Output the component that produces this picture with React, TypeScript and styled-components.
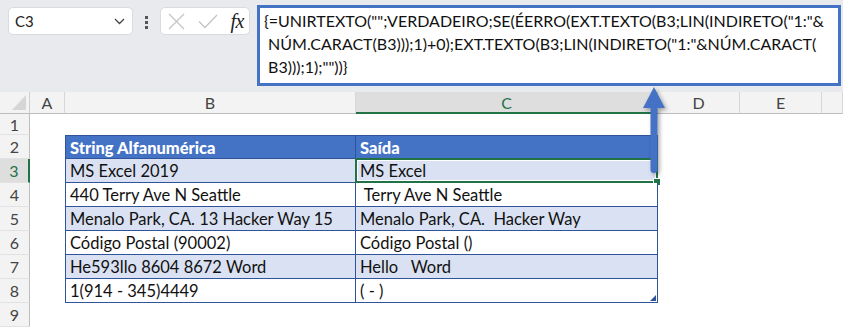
import styled, { createGlobalStyle, css } from 'styled-components';

const GlobalStyle = createGlobalStyle`
  html, body { margin: 0; padding: 0; background: #fff; }
  body { font-family: Lato, "Liberation Sans", sans-serif; }
`;

const BLUE = '#4472c4';
const LINE = '#30549a';
const GREEN = '#217346';

const Page = styled.div`
  position: relative;
  width: 843px;
  height: 327px;
  overflow: hidden;
  background: #fff;
`;

const TopBar = styled.div`
  display: flex;
  align-items: flex-start;
  height: 92px;
  box-sizing: border-box;
  padding: 5px 0 0 8px;
  background: #e8eaee;
`;

const NameBox = styled.div`
  display: flex;
  align-items: center;
  justify-content: space-between;
  box-sizing: border-box;
  width: 125px;
  height: 28px;
  margin-top: 2px;
  padding: 0 7px 0 6px;
  background: #fff;
  border: 1px solid #d9dbe0;
  border-radius: 5px;
  font-size: 15px;
  color: #222;
`;

const Dots = styled.div`
  display: flex;
  flex-direction: column;
  align-items: center;
  gap: 2px;
  width: 27px;
  margin-top: 11px;
  span {
    width: 3px;
    height: 3px;
    background: #555;
  }
`;

const FxBox = styled.div`
  display: flex;
  align-items: center;
  justify-content: space-between;
  box-sizing: border-box;
  width: 90px;
  height: 28px;
  margin-top: 2px;
  padding: 0 5px 0 7px;
  background: #fff;
  border: 1px solid #d9dbe0;
  border-radius: 5px;
`;

const FxLabel = styled.span`
  font-family: "Liberation Serif", serif;
  font-style: italic;
  font-size: 20px;
  color: #222;
  letter-spacing: -0.5px;
`;

const FormulaBox = styled.div`
  box-sizing: border-box;
  width: 584px;
  height: 81px;
  margin-left: 7px;
  padding: 1px 0 0 4px;
  background: #fff;
  border: 3px solid ${BLUE};
  font-size: 16px;
  line-height: 23px;
  color: #111;
  white-space: pre;
`;

const Sheet = styled.div`
  display: grid;
  grid-template-columns: 30px 35px 291px 302px 82px 82px 1fr;
  grid-template-rows: 22px 21px repeat(8, 24px);
  font-size: 16.5px;
`;

const Corner = styled.div`
  position: relative;
  background: #f3f3f3;
  border-right: 1px solid #cfcfcf;
  border-bottom: 1px solid #bdbdbd;
  &::after {
    content: '';
    position: absolute;
    right: 3px;
    bottom: 3px;
    width: 14px;
    height: 15px;
    background: #d6d6d6;
    clip-path: polygon(100% 0, 100% 100%, 0 100%);
  }
`;

const ColHead = styled.div<{ $active?: boolean }>`
  display: flex;
  align-items: center;
  justify-content: center;
  box-sizing: border-box;
  background: #f3f3f3;
  border-right: 1px solid #d7d7d7;
  border-bottom: 1px solid #bdbdbd;
  font-size: 16px;
  color: #444;
  ${({ $active }) =>
    $active &&
    css`
      background: #dedede;
      color: ${GREEN};
      border-bottom: 2px solid ${GREEN};
    `}
`;

const RowHead = styled.div<{ $active?: boolean }>`
  display: flex;
  align-items: center;
  justify-content: center;
  box-sizing: border-box;
  background: #f3f3f3;
  border-right: 1px solid #bdbdbd;
  border-bottom: 1px solid #e2e2e2;
  font-size: 16px;
  color: #444;
  ${({ $active }) =>
    $active &&
    css`
      background: #dedede;
      color: ${GREEN};
      border-right: 2px solid ${GREEN};
    `}
`;

const Empty = styled.div``;

const Cell = styled.div<{ $kind: 'head' | 'band' | 'plain'; $first?: boolean; $top?: boolean }>`
  position: relative;
  display: flex;
  align-items: center;
  box-sizing: border-box;
  padding: 1px 0 0 4px;
  white-space: pre;
  color: #111;
  border-right: 1px solid ${LINE};
  border-bottom: 1px solid ${LINE};
  ${({ $first }) => $first && css`border-left: 1px solid ${LINE};`}
  ${({ $top }) => $top && css`border-top: 1px solid ${LINE};`}
  background: ${({ $kind }) => ($kind === 'head' ? BLUE : $kind === 'band' ? '#d9e1f2' : '#fff')};
  ${({ $kind }) =>
    $kind === 'head' &&
    css`
      color: #fff;
      font-weight: 900;
    `}
`;

const Selection = styled.div`
  position: absolute;
  inset: -1px -1px -1px -1px;
  border: 2px solid ${GREEN};
  box-shadow: inset 0 0 0 1px #fff;
  pointer-events: none;
`;

const FillHandle = styled.div`
  position: absolute;
  right: -5px;
  bottom: -5px;
  width: 6px;
  height: 6px;
  background: ${GREEN};
  border: 1px solid #fff;
`;

const ResizeHandle = styled.div`
  position: absolute;
  right: 1px;
  bottom: 1px;
  width: 0;
  height: 0;
  border-left: 6px solid transparent;
  border-bottom: 6px solid ${LINE};
`;

const ArrowLayer = styled.svg`
  position: absolute;
  left: 636px;
  top: 82px;
  overflow: visible;
  pointer-events: none;
`;

const cols = ['A', 'B', 'C', 'D', 'E', ''];

const rows: [string, string][] = [
  ['String Alfanumérica', 'Saída'],
  ['MS Excel 2019', 'MS Excel'],
  ['440 Terry Ave N Seattle', ' Terry Ave N Seattle'],
  ['Menalo Park, CA. 13 Hacker Way 15', 'Menalo Park, CA.  Hacker Way'],
  ['Código Postal (90002)', 'Código Postal ()'],
  ['He593llo 8604 8672 Word', 'Hello   Word'],
  ['1(914 - 345)4449', '( - )'],
];

const formula = [
  '{=UNIRTEXTO("";VERDADEIRO;SE(ÉERRO(EXT.TEXTO(B3;LIN(INDIRETO("1:"&',
  ' NÚM.CARACT(B3)));1)+0);EXT.TEXTO(B3;LIN(INDIRETO("1:"&NÚM.CARACT(',
  ' B3)));1);""))}',
].join('\n');

export default function App() {
  return (
    <Page>
      <GlobalStyle />
      <TopBar>
        <NameBox>
          <span>C3</span>
          <svg width="11" height="7" viewBox="0 0 11 7">
            <path d="M1 1 L5.5 5.5 L10 1" fill="none" stroke="#444" strokeWidth="1.3" />
          </svg>
        </NameBox>
        <Dots>
          <span />
          <span />
          <span />
        </Dots>
        <FxBox>
          <svg width="17" height="17" viewBox="0 0 17 17">
            <path d="M1 1 L16 16 M16 1 L1 16" stroke="#c4c4c4" strokeWidth="1.3" />
          </svg>
          <svg width="20" height="15" viewBox="0 0 20 15">
            <path d="M1 7.5 L7 13.5 L19 1" fill="none" stroke="#c4c4c4" strokeWidth="1.3" />
          </svg>
          <FxLabel>fx</FxLabel>
        </FxBox>
        <FormulaBox>{formula}</FormulaBox>
      </TopBar>

      <Sheet>
        <Corner />
        {cols.map((c, i) => (
          <ColHead key={i} $active={c === 'C'}>
            {c}
          </ColHead>
        ))}

        {Array.from({ length: 9 }, (_, i) => {
          const r = i + 1;
          const data = r >= 2 && r <= 8 ? rows[r - 2] : null;
          const kind = r === 2 ? 'head' : r % 2 === 1 ? 'band' : 'plain';
          return [
            <RowHead key={`h${r}`} $active={r === 3}>
              {r}
            </RowHead>,
            <Empty key={`a${r}`} />,
            data ? (
              <Cell key={`b${r}`} $kind={kind} $first $top={r === 2}>
                {data[0]}
              </Cell>
            ) : (
              <Empty key={`b${r}`} />
            ),
            data ? (
              <Cell key={`c${r}`} $kind={kind} $top={r === 2}>
                {data[1]}
                {r === 3 && (
                  <Selection>
                    <FillHandle />
                  </Selection>
                )}
                {r === 8 && <ResizeHandle />}
              </Cell>
            ) : (
              <Empty key={`c${r}`} />
            ),
            <Empty key={`d${r}`} />,
            <Empty key={`e${r}`} />,
            <Empty key={`f${r}`} />,
          ];
        })}
      </Sheet>

      <ArrowLayer width="40" height="100" viewBox="0 0 40 100">
        <defs>
          <filter id="shadow" x="-50%" y="-20%" width="200%" height="140%">
            <feDropShadow dx="2" dy="2" stdDeviation="2" floodColor="#000" floodOpacity="0.35" />
          </filter>
        </defs>
        <g filter="url(#shadow)">
          <path d="M18 5 L29 26 L7 26 Z" fill={BLUE} />
          <rect x="14.5" y="22" width="7" height="69" rx="3.5" fill={BLUE} />
        </g>
      </ArrowLayer>
    </Page>
  );
}
